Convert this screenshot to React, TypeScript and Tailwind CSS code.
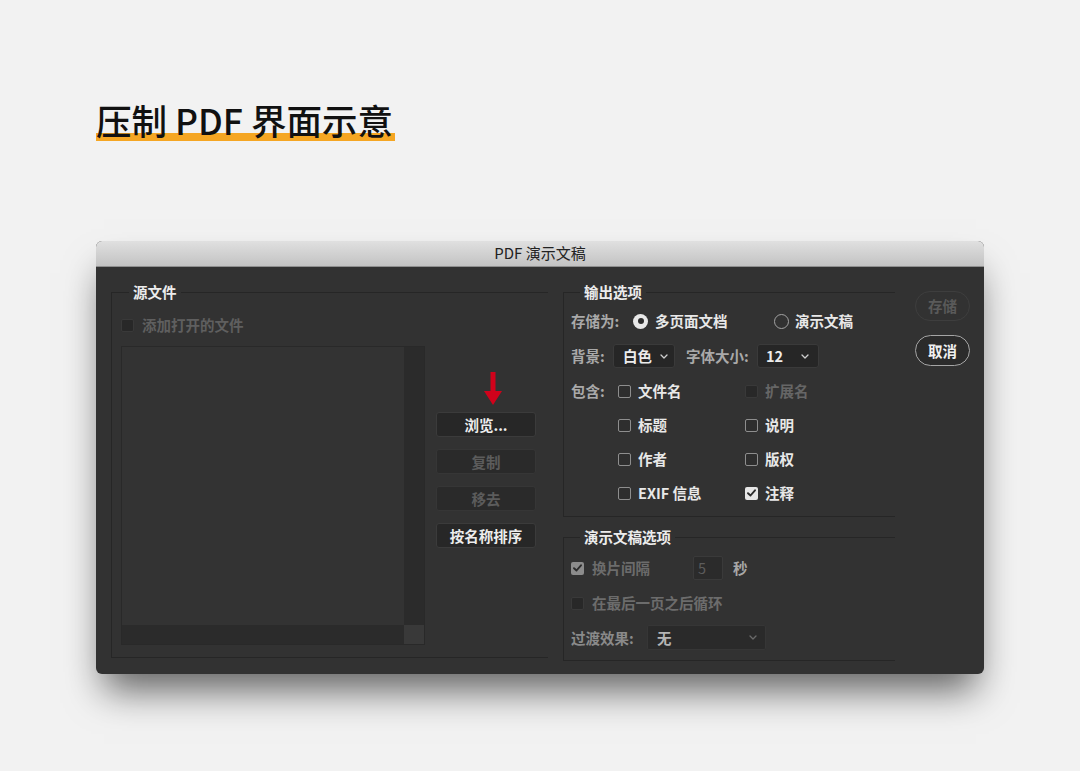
import React from "react";

type BoxState = "off" | "on" | "dimOff" | "dimOn";

const Tick = ({ color }: { color: string }) => (
  <svg width="9" height="8" viewBox="0 0 9 8" fill="none">
    <path d="M1 4.2 L3.5 6.5 L8 1.3" stroke={color} strokeWidth="1.9" strokeLinecap="round" strokeLinejoin="round" />
  </svg>
);

const CheckBox = ({ state }: { state: BoxState }) => {
  if (state === "on")
    return (
      <span className="flex h-[13px] w-[13px] shrink-0 items-center justify-center rounded-[2px] bg-[#e6e6e6]">
        <Tick color="#2b2b2b" />
      </span>
    );
  if (state === "dimOn")
    return (
      <span className="flex h-[13px] w-[13px] shrink-0 items-center justify-center rounded-[2px] bg-[#8c8c8c]">
        <Tick color="#2b2b2b" />
      </span>
    );
  if (state === "dimOff")
    return <span className="block h-[13px] w-[13px] shrink-0 rounded-[2px] border border-[#393939] bg-[#282828]" />;
  return <span className="block h-[13px] w-[13px] shrink-0 rounded-[2px] border border-[#8e8e8e] bg-[#2e2e2e]" />;
};

const Chevron = ({ color }: { color: string }) => (
  <svg width="8" height="5" viewBox="0 0 8 5" fill="none">
    <path d="M1 1 L4 4 L7 1" stroke={color} strokeWidth="1.3" strokeLinecap="round" strokeLinejoin="round" />
  </svg>
);

const Option = ({ state, label }: { state: BoxState; label: string }) => {
  const dim = state === "dimOff" || state === "dimOn";
  return (
    <div className="flex h-[24px] items-center gap-[7px]">
      <CheckBox state={state} />
      <span className={dim ? "font-semibold text-[#666]" : "font-semibold text-[#e8e8e8]"}>{label}</span>
    </div>
  );
};

export default function App() {
  return (
    <div className="min-h-[771px] bg-[#f2f2f2] pt-[98px] font-['Noto_Sans_CJK_SC','Noto_Sans',sans-serif]">
      {/* heading */}
      <div className="pl-[96px]">
        <h1 className="relative inline-block text-[35.5px] font-medium leading-[44px] text-[#111]">
          <span className="absolute bottom-[1px] left-0 right-[-2px] h-[8px] bg-[#f5a623]" />
          <span className="relative">压制 PDF 界面示意</span>
        </h1>
      </div>

      {/* dialog */}
      <div className="ml-[96px] mt-[99px] flex h-[433px] w-[888px] flex-col overflow-hidden rounded-[6px] bg-[#323232] shadow-[0_24px_36px_-8px_rgba(0,0,0,0.6)]">
        <div className="flex h-[26px] shrink-0 items-center justify-center border-b border-[#8f8f8f] bg-gradient-to-b from-[#e0e0e0] to-[#c3c3c3] text-[15px] text-[#222]">
          PDF 演示文稿
        </div>

        <div className="flex flex-1 pl-[15px] pt-[15px] text-[14.5px]">
          {/* source files */}
          <fieldset className="h-[376px] w-[437px] border border-r-0 border-[#262626] p-0">
            <legend className="ml-[17px] px-[4px] font-bold leading-[20px] text-[#ececec]">源文件</legend>
            <div className="pl-[9px] pt-[13px]">
              <div className="flex h-[20px] items-center gap-[8px]">
                <CheckBox state="dimOff" />
                <span className="font-semibold text-[#5f5f5f]">添加打开的文件</span>
              </div>
              <div className="mt-[11px] flex gap-[11px]">
                <div className="flex h-[299px] w-[304px] flex-col border border-[#292929] bg-[#333]">
                  <div className="flex flex-1">
                    <div className="flex-1" />
                    <div className="w-[20px] bg-[#2b2b2b]" />
                  </div>
                  <div className="flex h-[19px]">
                    <div className="flex-1 bg-[#2b2b2b]" />
                    <div className="w-[20px] bg-[#393939]" />
                  </div>
                </div>
                <div className="flex w-[100px] flex-col pt-[26px]">
                  <svg className="ml-[48px]" width="18" height="33" viewBox="0 0 18 33">
                    <rect x="6.5" y="0" width="5" height="21" fill="#d0021b" />
                    <polygon points="0,19 18,19 9,33" fill="#d0021b" />
                  </svg>
                  <div className="mt-[7px] flex flex-col gap-[12px]">
                    <button className="h-[25px] rounded-[3px] border border-[#3b3b3b] bg-[#272727] font-bold text-[#ededed]">浏览...</button>
                    <button className="h-[25px] rounded-[3px] border border-[#363636] bg-[#2a2a2a] font-bold text-[#5c5c5c]">复制</button>
                    <button className="h-[25px] rounded-[3px] border border-[#363636] bg-[#2a2a2a] font-bold text-[#5c5c5c]">移去</button>
                    <button className="h-[25px] rounded-[3px] border border-[#3b3b3b] bg-[#272727] font-bold text-[#ededed]">按名称排序</button>
                  </div>
                </div>
              </div>
            </div>
          </fieldset>

          {/* options */}
          <div className="ml-[15px] flex w-[332px] flex-col gap-[10px]">
            <fieldset className="h-[235px] border border-r-0 border-[#262626] p-0">
              <legend className="ml-[16px] px-[4px] font-bold leading-[20px] text-[#ececec]">输出选项</legend>
              <div className="flex flex-col gap-[11px] pl-[7px] pt-[7px]">
                <div className="flex h-[24px] items-center">
                  <span className="w-[62px] font-semibold text-[#a9a9a9]">存储为:</span>
                  <div className="flex w-[141px] items-center gap-[7px]">
                    <span className="flex h-[15px] w-[15px] items-center justify-center rounded-full bg-[#e8e8e8]">
                      <span className="h-[6px] w-[6px] rounded-full bg-[#2d2d2d]" />
                    </span>
                    <span className="font-semibold text-[#e8e8e8]">多页面文档</span>
                  </div>
                  <div className="flex items-center gap-[6px]">
                    <span className="h-[15px] w-[15px] rounded-full border border-[#a3a3a3]" />
                    <span className="font-semibold text-[#e8e8e8]">演示文稿</span>
                  </div>
                </div>
                <div className="flex h-[24px] items-center">
                  <span className="w-[42px] font-semibold text-[#a9a9a9]">背景:</span>
                  <div className="flex h-[24px] w-[62px] items-center justify-between rounded-[3px] border border-[#3a3a3a] bg-[#262626] pl-[9px] pr-[6px]">
                    <span className="font-semibold text-[#ececec]">白色</span>
                    <Chevron color="#cfcfcf" />
                  </div>
                  <span className="ml-[11px] w-[71px] font-semibold text-[#a9a9a9]">字体大小:</span>
                  <div className="flex h-[24px] w-[62px] items-center justify-between rounded-[3px] border border-[#3a3a3a] bg-[#262626] pl-[8px] pr-[9px]">
                    <span className="font-semibold text-[#ececec]">12</span>
                    <Chevron color="#cfcfcf" />
                  </div>
                </div>
                <div className="flex">
                  <span className="flex h-[24px] w-[47px] items-center font-semibold text-[#a9a9a9]">包含:</span>
                  <div className="grid grid-cols-[127px_127px] gap-y-[10px]">
                    <Option state="off" label="文件名" />
                    <Option state="dimOff" label="扩展名" />
                    <Option state="off" label="标题" />
                    <Option state="off" label="说明" />
                    <Option state="off" label="作者" />
                    <Option state="off" label="版权" />
                    <Option state="off" label="EXIF 信息" />
                    <Option state="on" label="注释" />
                  </div>
                </div>
              </div>
            </fieldset>

            <fieldset className="h-[134px] border border-r-0 border-[#262626] p-0">
              <legend className="ml-[16px] px-[4px] font-bold leading-[20px] text-[#ececec]">演示文稿选项</legend>
              <div className="flex flex-col pl-[7px] pt-[9px]">
                <div className="flex h-[24px] items-center">
                  <div className="flex w-[122px] items-center gap-[8px]">
                    <CheckBox state="dimOn" />
                    <span className="font-semibold text-[#6c6c6c]">换片间隔</span>
                  </div>
                  <div className="flex h-[24px] w-[30px] items-center rounded-[2px] border border-[#3a3a3a] bg-[#2b2b2b] pl-[4px] text-[#5c5c5c]">5</div>
                  <span className="ml-[10px] font-bold text-[#a8a8a8]">秒</span>
                </div>
                <div className="mt-[11px] flex h-[24px] items-center gap-[8px]">
                  <CheckBox state="dimOff" />
                  <span className="font-semibold text-[#6c6c6c]">在最后一页之后循环</span>
                </div>
                <div className="mt-[10px] flex h-[25px] items-center">
                  <span className="w-[76px] font-semibold text-[#8a8a8a]">过渡效果:</span>
                  <div className="flex h-[25px] w-[119px] items-center justify-between rounded-[2px] border border-[#363636] bg-[#2a2a2a] pl-[9px] pr-[8px]">
                    <span className="font-semibold text-[#b5b5b5]">无</span>
                    <Chevron color="#6a6a6a" />
                  </div>
                </div>
              </div>
            </fieldset>
          </div>

          {/* actions */}
          <div className="ml-[20px] flex w-[55px] flex-col gap-[14px] pt-[9px]">
            <button className="h-[30px] rounded-full border border-[#3e3e3e] font-bold text-[#5a5a5a]">存储</button>
            <button className="h-[31px] rounded-full border-[1.5px] border-[#a5a5a5] bg-[#2b2b2b] font-bold text-[#f0f0f0]">取消</button>
          </div>
        </div>
      </div>
    </div>
  );
}
